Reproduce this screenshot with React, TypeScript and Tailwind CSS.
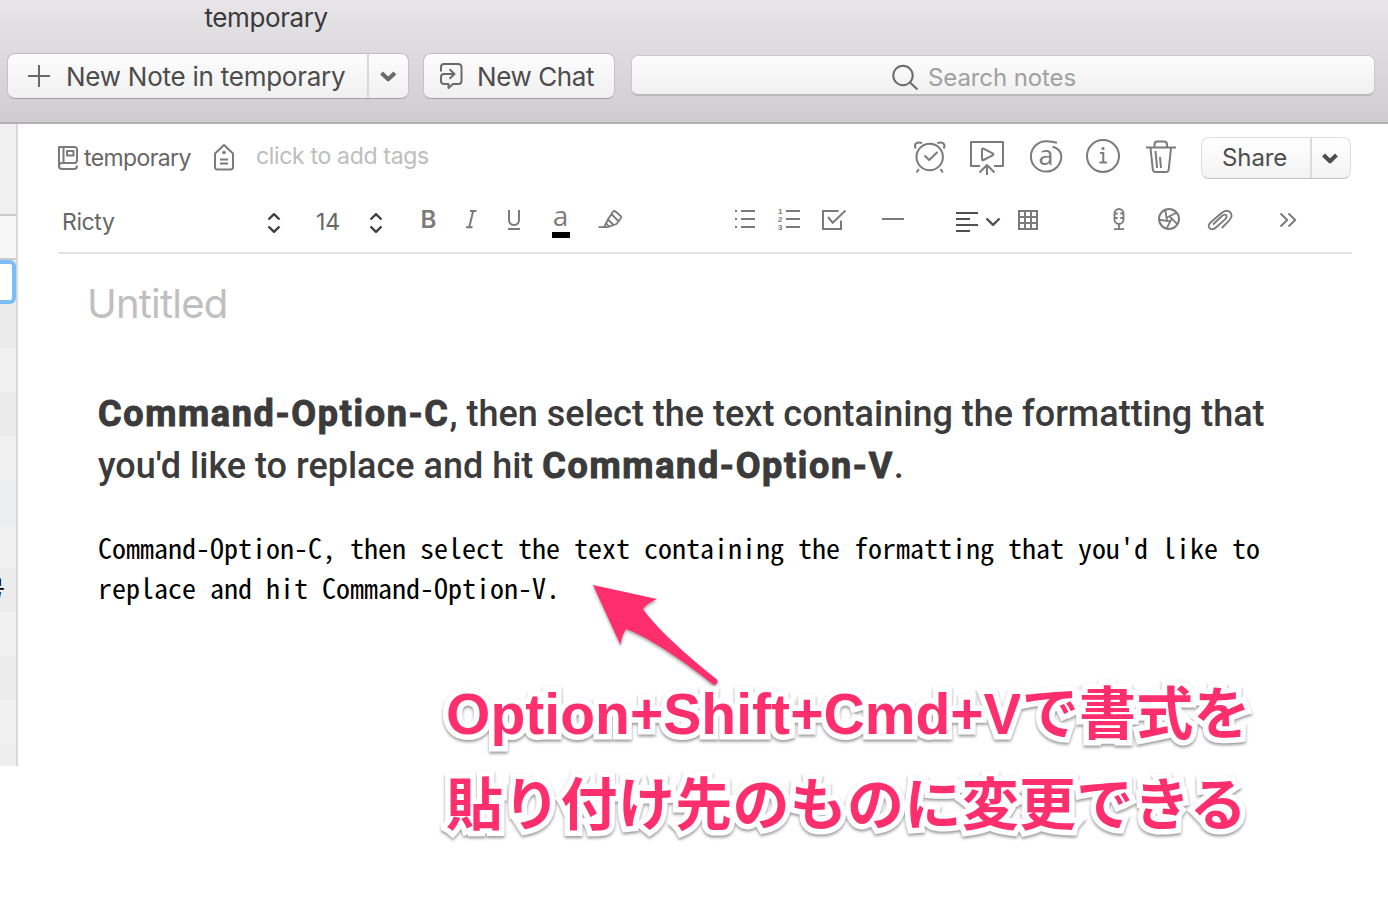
import type { ReactNode } from "react";

const UI = "font-['Inter',sans-serif] whitespace-nowrap";

function Icon({ box, sw = 2, className = "", children }: { box: [number, number, number, number]; sw?: number; className?: string; children: ReactNode }) {
  return (
    <svg width={box[2]} height={box[3]} viewBox={box.join(" ")} fill="none" stroke="currentColor" strokeWidth={sw} strokeLinejoin="round" className={"shrink-0 overflow-visible " + className}>
      {children}
    </svg>
  );
}

function Stepper() {
  return (
    <Icon box={[0, 0, 16, 32]} sw={2.4} className="text-[#404040]">
      <path d="M2.500 13.500 8 8.200l5.500 5.300M2.500 20.500 8 25.800l5.500-5.300" />
    </Icon>
  );
}

function Header() {
  return (
    <header className="flex h-[124px] flex-col border-b-2 border-[#b1afb2] bg-linear-to-b from-[#e7e5e8] to-[#cfcdd0]">
      <div className="h-[34px] pl-[204.5px]">
        <span className={UI + " text-[26px] leading-[35px] tracking-[-0.4px] text-[#3a393b]"}>temporary</span>
      </div>
      <div className="mt-[19px] flex h-[46px] items-center">
        <div className="ml-[7px] flex h-[46px] w-[402px] rounded-[8px] border border-[#c3c1c4] border-b-[#a3a1a4] bg-linear-to-b from-[#fdfdfd] to-[#f0f0f0] text-[#6a6a6a]">
          <div className="flex w-[361px] items-center border-r-2 border-[#d9d9d9]">
            <Icon box={[27, 64, 24, 24]} className="ml-[19px]"><path d="M28 76h22M39 65v22" /></Icon>
            <span className={UI + " ml-[15px] text-[26px] tracking-[-0.25px] text-[#4c4c4c]"}>New Note in temporary</span>
          </div>
          <div className="flex flex-1 items-center justify-center pr-[2px]">
            <Icon box={[378, 66, 20, 20]} sw={4}><path d="m381.500 73 6.700 6.300 6.700-6.300" /></Icon>
          </div>
        </div>
        <div className="ml-[14px] flex h-[46px] w-[192px] items-center rounded-[8px] border border-[#c3c1c4] border-b-[#a3a1a4] bg-linear-to-b from-[#fdfdfd] to-[#f0f0f0] text-[#6a6a6a]">
          <Icon box={[439, 62, 24, 28]} className="ml-[15px]">
            <path d="M441 71.500V67q0-3 3-3h14q3.500 0 3.500 3.500v13.500q0 3-3 3H453l-4.500 4v-4H444q-3 0-3-3v-4q0-3 3-3h10M449.500 69.200l5 4.800-5 4.800" />
          </Icon>
          <span className={UI + " ml-[14px] text-[26px] tracking-[-0.4px] text-[#4c4c4c]"}>New Chat</span>
        </div>
        <div className="mb-[1px] ml-[16px] flex h-[41px] w-[744px] items-center rounded-[7px] border border-[#c9c7ca] border-b-2 border-b-[#bbb9bc] bg-linear-to-b from-[#fdfdfd] to-[#f0f0f0] pt-[5px] text-[#6a6a6a]">
          <Icon box={[892, 64, 28, 28]} className="ml-[260px]"><circle cx="903" cy="75.500" r="9.700" /><path d="m910 82.500 7.500 7" /></Icon>
          <span className={UI + " ml-[8px] text-[24px] tracking-[-0.1px] text-[#a0a0a0]"}>Search notes</span>
        </div>
      </div>
    </header>
  );
}

const rows = ["bg-[#ebebeb]", "bg-[#f0f0f0]", "bg-[#ebebeb]", "bg-[#f0f0f0]", "bg-[#ebedf0]", "bg-[#f0f0f0]", "bg-[#ececec]", "bg-[#f0f0f0]", "bg-[#ececec]", "bg-[#f0f0f0]"];

function Sidebar() {
  return (
    <aside className="flex h-[642px] w-[18px] shrink-0 flex-col overflow-hidden border-r-2 border-[#d8d8d8] bg-[#ededed]">
      <div className="h-[92px] shrink-0 border-b-2 border-[#cbcbcb] bg-[#f0f0f0]" />
      <div className="h-[44px] shrink-0 border-b-2 border-[#cbcbcb] bg-[#f7f7f7]" />
      <div className="h-[44px] shrink-0 rounded-r-[6px] border-y-4 border-r-4 border-[#7dbdf5] bg-white" />
      {rows.map((c, i) => (
        <div key={i} className={"flex h-[44px] shrink-0 items-center justify-end pr-[11px] pb-[5px] " + c}>
          {i === 6 && <span className="font-['Noto_Sans_CJK_JP',sans-serif] text-[24px] leading-none text-black">号</span>}
        </div>
      ))}
    </aside>
  );
}

function InfoBar() {
  return (
    <div className="flex h-[68px] items-center text-[#7b7b7b]">
      <Icon box={[56, 138, 24, 40]} className="ml-[38px]">
        <path d="M59 167V147h15.500q2.500 0 2.500 2.500V160q0 3-2.500 3H62q-3 0-3 3t3 3h12q3 0 3-3.500M63.500 147v16M67 151h6.500v4.500H67z" />
      </Icon>
      <span className={UI + " mt-[1px] ml-[4px] w-[108px] text-[23px] tracking-[-0.6px] text-[#666]"}>temporary</span>
      <Icon box={[212, 138, 24, 40]} className="ml-[20px]">
        <path d="m224 145 9 8.500V167q0 2.500-2.500 2.500h-13q-2.500 0-2.500-2.500v-13.500zM220 159.500h8M220 163.500h8" />
        <circle cx="224" cy="152.500" r="1.800" fill="currentColor" stroke="none" />
      </Icon>
      <span className={UI + " mb-[4px] ml-[20px] text-[23px] tracking-[-0.33px] text-[#bdbdbd]"}>click to add tags</span>
      <div className="flex-1" />
      <Icon box={[912, 138, 36, 40]} className="mr-[20px]">
        <circle cx="929.700" cy="157" r="13.200" />
        <path d="m924.500 155.500 4.700 4.500 8.300-8M915.800 148.500c-2.500-4 1-7.500 6.200-5.300M943.600 148.500c2.500-4-1-7.500-6.200-5.300M918.800 169l-2.200 3.600M940.600 169l2.200 3.600" />
      </Icon>
      <Icon box={[968, 138, 38, 40]} className="mr-[22px]">
        <path d="M980 166h-9v-24h32v24h-9M987 165v10M979.500 172.500l7.500-7.500 7.500 7.500M982 149.500q0-1.500 1.500-.8l9.500 5q1 .8 0 1.500l-9.500 4.800q-1.500.6-1.500-1z" />
      </Icon>
      <Icon box={[1028, 138, 36, 40]} className="mr-[21px]">
        <path d="M1057 142.800q-5.500-1.700-11-1.600a15.200 15.200 0 1 0 15.300 15.300q-.3-7.500-8.800-9.800" />
        <text x="1046" y="165" textAnchor="middle" className="fill-current stroke-none font-['Open_Sans',sans-serif] text-[27px]">a</text>
      </Icon>
      <Icon box={[1085, 138, 36, 40]} className="mr-[23px]">
        <circle cx="1103" cy="156" r="16" />
        <path d="M1100 153h3.300v9.500M1099.500 162.500h7.500" />
        <circle cx="1103" cy="148.500" r="1.600" fill="currentColor" stroke="none" />
      </Icon>
      <Icon box={[1144, 138, 34, 40]} className="mr-[23px]">
        <path d="M1146 147.500h30M1154.500 147v-2.500q0-3 3-3h6.500q3 0 3 3v2.500M1150.500 148l2.300 21.500q.3 2.500 2.700 2.500h10.500q2.400 0 2.700-2.500l2.300-21.500M1155.500 151l1.600 17M1160 157l1 11" />
      </Icon>
      <div className="mr-[37px] flex h-[42px] w-[150px] rounded-[8px] border border-[#dedede] border-b-[#c2c2c2] bg-linear-to-b from-white to-[#f3f3f3] text-[#4d4d4d]">
        <div className="flex w-[110px] items-center border-r-2 border-[#dcdcdc] pl-[20px]">
          <span className={UI + " text-[24px] tracking-[-0.1px]"}>Share</span>
        </div>
        <div className="flex flex-1 items-center justify-center pr-[2px]">
          <Icon box={[378, 66, 20, 20]} sw={4}><path d="m381.500 73 6.500 6.300 6.500-6.300" /></Icon>
        </div>
      </div>
    </div>
  );
}

function FormatBar() {
  return (
    <div className="mr-[36px] ml-[40px] flex h-[62px] items-center border-b-2 border-[#e3e3e3] text-[#7b7b7b]">
      <span className={UI + " ml-[4px] w-[204px] text-[23px] tracking-[-0.4px] text-[#666]"}>Ricty</span>
      <Stepper />
      <span className={UI + " ml-[34px] w-[52px] text-[23px] tracking-[-0.2px] text-[#666]"}>14</span>
      <Stepper />
      <Icon box={[420, 206, 18, 32]} className="ml-[36px]">
        <text x="420.500" y="228" className="fill-current stroke-none font-['Inter',sans-serif] text-[24px] font-semibold">B</text>
      </Icon>
      <Icon box={[462, 206, 18, 32]} className="ml-[24px]">
        <path d="M470 211h6.500M466 227.200h6.500M473.200 211l-4 16.200" />
      </Icon>
      <Icon box={[505, 206, 18, 32]} className="ml-[25px]">
        <path d="M509 210v9.500q0 5.500 5 5.500t5-5.500V210M508 229h12" />
      </Icon>
      <Icon box={[551, 206, 20, 32]} className="ml-[28px]">
        <text x="560.500" y="225.500" textAnchor="middle" className="fill-current stroke-none font-['Open_Sans',sans-serif] text-[28px]">a</text>
        <path d="M552 235h18" stroke="#000" strokeWidth="6" />
      </Icon>
      <Icon box={[597, 206, 26, 32]} sw={1.8} className="ml-[26px]">
        <path d="M598.500 227.200h9l9-3.200 4.500-6q.7-1.200-.3-2l-5.500-4.700q-1.200-.8-2 .2l-5 7.500-4 8M611.300 214l7 7M608 219.500l5.500 5.500M605.500 222.500l4 4.500" />
      </Icon>
      <Icon box={[733, 206, 24, 32]} className="ml-[110px]">
        <path d="M735 211h2M735 219h2M735 227h2M741 211h14M741 219h14M741 227h14" />
      </Icon>
      <Icon box={[776, 206, 26, 32]} className="ml-[19px]">
        <path d="M786 211h14M786 219h14M786 227h14" />
        <g className="fill-current stroke-none font-['Liberation_Sans',sans-serif] text-[8px] font-bold">
          <text x="778" y="214">1</text><text x="778" y="222">2</text><text x="778" y="230">3</text>
        </g>
      </Icon>
      <Icon box={[820, 206, 28, 32]} className="ml-[18px]">
        <path d="M838.500 211H823v18h18v-8.500M828 217l4.700 5.800 12.800-12.300" strokeLinejoin="miter" />
      </Icon>
      <Icon box={[880, 206, 26, 32]} className="ml-[32px]"><path d="M882 219h22" /></Icon>
      <Icon box={[954, 206, 48, 32]} className="ml-[48px] text-[#505050]">
        <path d="M956 213h22M956 219h14M956 225h22M956 231h14" />
        <path d="m986.500 218.500 6.500 6.300 6.500-6.300" strokeWidth="2.400" />
      </Icon>
      <Icon box={[1016, 206, 24, 32]} className="ml-[14px]">
        <path d="M1019 211h18v18h-18zM1025 211v18M1031 211v18M1019 217h18M1019 223h18" strokeLinejoin="miter" />
      </Icon>
      <Icon box={[1109, 206, 20, 32]} sw={1.8} className="ml-[69px]">
        <rect x="1114.500" y="209" width="9" height="15" rx="4.500" />
        <path d="M1119 224v5M1114 229.200h10M1115 213.500h2.700M1120.300 213.500h3M1115 218h2.700M1120.300 218h3" />
      </Icon>
      <Icon box={[1156, 206, 26, 32]} sw={1.8} className="ml-[27px]">
        <circle cx="1169" cy="219" r="10" strokeWidth="2" />
        {[0, 72, 144, 216, 288].map((a) => (
          <path key={a} d="M1165.300 210 1167 220.500" transform={`rotate(${a} 1169 219)`} />
        ))}
      </Icon>
      <Icon box={[1206, 206, 28, 32]} sw={1.8} className="ml-[24px]">
        <path d="M1221.800 228 1229.300 220.300Q1233.500 215.500 1230 212 1226.500 209 1221.500 213L1210.500 222.500Q1207 226 1210 228.500 1213 230.500 1216.500 227L1225.500 218.800Q1227.500 216.500 1226 215 1224.300 213.800 1222 216L1213 224.500" />
      </Icon>
      <Icon box={[1278, 206, 20, 32]} className="ml-[44px]">
        <path d="m1280.500 213.500 6.700 6.500-6.700 6.500M1288.500 213.500l6.700 6.500-6.700 6.500" />
      </Icon>
    </div>
  );
}

const strong = "font-bold tracking-[1.65px] [-webkit-text-stroke:1px_currentColor]";

function Note() {
  return (
    <article className="flex flex-col">
      <span className={UI + " mt-[20px] ml-[69px] self-start text-[40px] leading-[60px] tracking-[-0.8px] text-[#bfbfbf]"}>Untitled</span>
      <h1 className="mt-[54px] ml-[80px] font-['Roboto',sans-serif] text-[36px] leading-[52px] font-medium whitespace-nowrap text-[#3b3b3b]">
        <b className={strong}>Command-Option-C</b>, then select the text containing the formatting that
        <br />
        you'd like to replace and hit <b className={strong}>Command-Option-V</b>.
      </h1>
      <p className="mt-[35px] ml-[80px] font-['Noto_Sans_Mono_CJK_JP','Liberation_Mono',monospace] text-[28px] leading-[40px] whitespace-nowrap text-black">
        Command-Option-C, then select the text containing the formatting that you'd like to
        <br />
        replace and hit Command-Option-V.
      </p>
    </article>
  );
}

function Annotation() {
  return (
    <>
      <svg className="absolute top-[575px] left-[583px] drop-shadow-[0_2px_1.5px_rgba(0,0,0,0.35)]" width="150" height="120" viewBox="583 575 150 120" fill="#ff2f6e">
        <path d="M593 585l64 14q-10 4.500-14 10c12 17 37 41 74 70.500 2 3-1 6-4 5-24-19.500-64-47.500-87-55.500q-4 6-5.500 16z" />
      </svg>
      <p className="absolute top-[669px] left-[446px] font-['Liberation_Sans','Noto_Sans_CJK_JP',sans-serif] text-[57px] leading-[91px] font-bold whitespace-nowrap text-[#ff2f6e] drop-shadow-[0_2px_1.5px_rgba(0,0,0,0.4)] [-webkit-text-stroke:11px_white] [paint-order:stroke]">
        <span className="tracking-[0.05px]">Option+Shift+Cmd+V</span><span className="tracking-[0.3px]">で書式を<br />貼り付け先のものに変更できる</span>
      </p>
    </>
  );
}

export default function App() {
  return (
    <div className="relative h-[898px] w-[1388px] overflow-hidden bg-white">
      <Header />
      <div className="flex">
        <Sidebar />
        <main className="min-w-0 flex-1">
          <InfoBar />
          <FormatBar />
          <Note />
        </main>
      </div>
      <Annotation />
    </div>
  );
}
